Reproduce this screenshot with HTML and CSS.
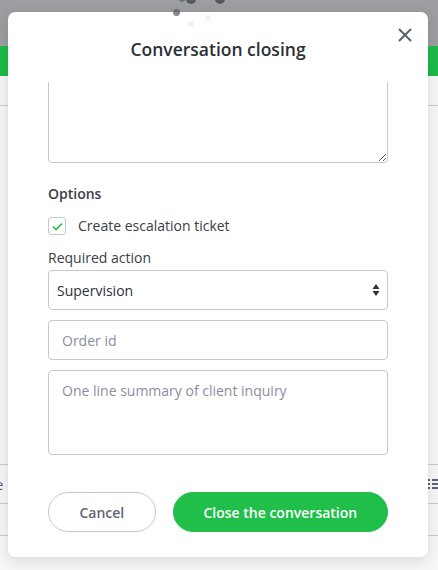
FILE: index.html
```html
<!DOCTYPE html>
<html>
<head>
<meta charset="utf-8">
<link rel="stylesheet" href="styles.css">
</head>
<body>
<div class="page">
  <div class="topbar"></div>
  <div class="greenbar"></div>
  <div class="app">
    <div class="row row-first"></div>
    <div class="spacer"></div>
    <div class="row row-mid"><span class="edge-text">Type</span><span class="list-icon"><svg width="14" height="10" viewBox="0 0 14 10"><g fill="#5f6577"><rect x="0" y="0" width="2" height="2"/><rect x="4" y="0" width="10" height="2"/><rect x="0" y="4" width="2" height="2"/><rect x="4" y="4" width="10" height="2"/><rect x="0" y="8" width="2" height="2"/><rect x="4" y="8" width="10" height="2"/></g></svg></span></div>
    <div class="row row-small"></div>
  </div>
</div>

<div class="modal">
  <div class="modal-header">
    <h1 class="modal-title">Conversation closing</h1>
    <button class="close-btn" aria-label="Close"><svg width="14" height="14" viewBox="0 0 14 14"><path d="M1.5 1.5 L12.5 12.5 M12.5 1.5 L1.5 12.5" stroke="#5c6170" stroke-width="2" stroke-linecap="round"/></svg></button>
  </div>
  <div class="modal-body">
    <textarea class="field textarea-top"></textarea>
    <div class="section-title">Options</div>
    <label class="check-row">
      <span class="checkbox"><svg width="11" height="9" viewBox="0 0 11 9"><path d="M1 4.5 L4 7.5 L10 1.5" fill="none" stroke="#1fbf4a" stroke-width="1.6"/></svg></span>
      <span class="check-label">Create escalation ticket</span>
    </label>
    <div class="field-label">Required action</div>
    <div class="select-wrap">
      <select class="field select"><option>Supervision</option></select>
      <span class="select-arrows"><svg width="8" height="14" viewBox="0 0 8 14"><path d="M4 1 L7.5 6 L0.5 6 Z M4 13 L7.5 8 L0.5 8 Z" fill="#2d3039"/></svg></span>
    </div>
    <input class="field input" type="text" placeholder="Order id">
    <textarea class="field textarea-summary" placeholder="One line summary of client inquiry"></textarea>
  </div>
  <div class="modal-footer">
    <button class="btn btn-cancel">Cancel</button>
    <button class="btn btn-primary">Close the conversation</button>
  </div>
</div>

<div class="spinner">
  <span class="dot d1"></span>
  <span class="dot d2"></span>
  <span class="dot d3"></span>
  <span class="dot d4"></span>
  <span class="dot d5"></span>
  <span class="dot d6"></span>
</div>
</body>
</html>
```
FILE: styles.css
```css
* { box-sizing: border-box; }
html, body { margin: 0; padding: 0; }
body {
  width: 438px;
  height: 570px;
  overflow: hidden;
  font-family: "Open Sans", "Liberation Sans", sans-serif;
  background: #ffffff;
  position: relative;
}
.page { display: flex; flex-direction: column; height: 570px; }
.topbar { height: 46px; background: #9c9ea2; flex: none; }
.greenbar { height: 30px; background: #1dbc4a; flex: none; }
.app { flex: 1; background: #f7f7f8; display: flex; flex-direction: column; }
.row-first { height: 30px; border-bottom: 1px solid #c9ccd2; }
.spacer { height: 359px; border-bottom: 1px solid #c9ccd2; }
.row-mid {
  height: 39px;
  border-bottom: 1px solid #c9ccd2;
  display: flex;
  align-items: center;
  justify-content: space-between;
  color: #5f6577;
  font-size: 15px;
}
.edge-text { margin-left: -30px; }
.list-icon { display: flex; margin-right: -4px; }
.row-small { height: 32px; border-bottom: 1px solid #c9ccd2; }

.modal {
  position: absolute;
  left: 8px;
  top: 12px;
  width: 420px;
  height: 545px;
  background: #ffffff;
  border-radius: 7px;
  box-shadow: 0 4px 16px rgba(0, 0, 0, 0.12), 0 0 2px rgba(0,0,0,0.06);
  display: flex;
  flex-direction: column;
  overflow: hidden;
}
.modal-header {
  height: 70px;
  flex: none;
  position: relative;
  padding-top: 25px;
}
.modal-title {
  margin: 0;
  text-align: center;
  font-size: 17.5px;
  line-height: 24px;
  font-weight: 600;
  color: #2d3039;
}
.close-btn {
  position: absolute;
  right: 15px;
  top: 15px;
  width: 16px;
  height: 16px;
  padding: 0;
  border: 0;
  background: transparent;
  display: flex;
  align-items: center;
  justify-content: center;
}
.modal-body {
  flex: none;
  height: 388px;
  overflow: hidden;
  padding: 0 40px;
  display: flex;
  flex-direction: column;
}
.field {
  display: block;
  width: 340px;
  border: 1px solid #c5c8cf;
  border-radius: 4px;
  background: #fff;
  font-family: inherit;
  font-size: 14px;
  color: #2d3039;
  outline: none;
  margin: 0;
}
.field::placeholder { color: #8a8ea0; }
.textarea-top {
  height: 100px;
  margin-top: -19px;
  flex: none;
  resize: vertical;
}
.section-title {
  margin-top: 21px;
  font-size: 14px;
  line-height: 20px;
  font-weight: 600;
  color: #3a3d46;
}
.check-row {
  margin-top: 13px;
  display: flex;
  align-items: center;
  height: 18px;
}
.checkbox {
  width: 18px;
  height: 18px;
  border: 1px solid #c5c8cf;
  border-radius: 3px;
  display: flex;
  align-items: center;
  justify-content: center;
  flex: none;
}
.check-label {
  margin-left: 12px;
  font-size: 14px;
  line-height: 18px;
  color: #3a3d46;
}
.field-label {
  margin-top: 13px;
  font-size: 14px;
  line-height: 20px;
  color: #3a3d46;
}
.select-wrap {
  position: relative;
  margin-top: 2px;
  flex: none;
}
.select {
  height: 40px;
  padding: 0 0 0 8px;
  appearance: none;
  -webkit-appearance: none;
}
.select-arrows {
  position: absolute;
  right: 8px;
  top: 13px;
  display: flex;
}
.input {
  height: 40px;
  margin-top: 10px;
  padding: 0 13px;
  flex: none;
}
.textarea-summary {
  height: 85px;
  margin-top: 10px;
  padding: 10px 13px;
  resize: none;
  flex: none;
  line-height: 20px;
}
.modal-footer {
  flex: none;
  display: flex;
  gap: 17px;
  padding: 22px 40px 0;
}
.btn {
  height: 40px;
  border-radius: 20px;
  font-family: inherit;
  font-size: 14px;
  font-weight: 600;
  padding: 0;
  cursor: pointer;
}
.btn-cancel {
  width: 108px;
  background: #fff;
  border: 1px solid #c5c8cf;
  color: #5f6577;
}
.btn-primary {
  width: 216px;
  background: #1fbf4a;
  border: 1px solid #1fbf4a;
  color: #ffffff;
}

.spinner {
  position: absolute;
  left: 160px;
  top: -10px;
  width: 80px;
  height: 40px;
}
.dot {
  position: absolute;
  border-radius: 50%;
  background: #55585f;
}
.d1 { left: 19px; top: 6px; width: 6px; height: 6px; opacity: 0.6; }
.d2 { left: 26px; top: 4px; width: 10px; height: 10px; }
.d3 { left: 55px; top: 4px; width: 10px; height: 10px; }
.d4 { left: 13px; top: 19px; width: 7px; height: 7px; opacity: 0.7; }
.d5 { left: 28px; top: 31px; width: 6px; height: 6px; opacity: 0.08; }
.d6 { left: 45px; top: 25px; width: 6px; height: 6px; opacity: 0.08; }
```
